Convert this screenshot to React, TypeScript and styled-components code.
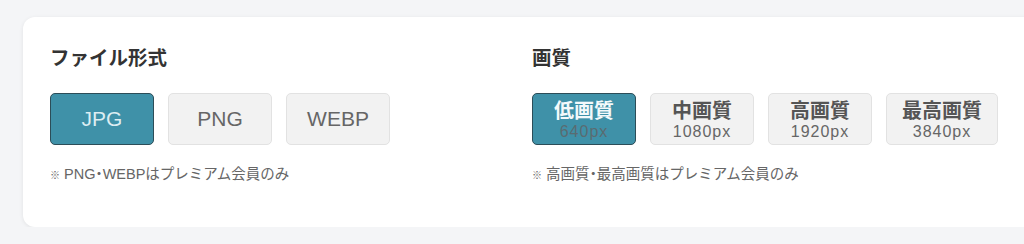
import React, { useState } from "react";
import styled, { createGlobalStyle, css } from "styled-components";

const Global = createGlobalStyle`
  html, body {
    margin: 0;
    padding: 0;
    background: #f4f5f7;
    overflow: hidden;
  }
  body {
    font-family: "Liberation Sans", "Noto Sans CJK JP", sans-serif;
    color: #333;
  }
`;

const Page = styled.div`
  padding: 17px 0 0 23px;
  width: 1100px;
`;

const Card = styled.div`
  width: 1018px;
  box-sizing: border-box;
  background: #fff;
  border-radius: 12px;
  box-shadow: 0 1px 4px rgba(0, 0, 0, 0.08);
  padding: 26px 27px 0 27px;
  height: 210px;
  display: grid;
  grid-template-columns: 1fr 1fr;
`;

const Section = styled.section`
  display: flex;
  flex-direction: column;
`;

const Title = styled.h2`
  margin: 0;
  font-size: 19.5px;
  line-height: 28px;
  font-weight: 700;
  color: #333;
  font-family: "Noto Sans CJK JP", sans-serif;
`;

const Options = styled.div`
  display: flex;
  gap: 14px;
  margin-top: 22px;
`;

const OptionButton = styled.button<{ $active?: boolean }>`
  box-sizing: border-box;
  min-width: 104px;
  height: 52px;
  padding: 0 16px;
  border-radius: 5px;
  border: 1.5px solid #e2e2e2;
  background: #f2f2f2;
  color: #666;
  font-family: "Liberation Sans", "Noto Sans CJK JP", sans-serif;
  font-size: 21px;
  display: flex;
  flex-direction: column;
  align-items: center;
  justify-content: center;
  cursor: pointer;
  ${(p) =>
    p.$active &&
    css`
      background: #3f91a8;
      border-color: #2c4d58;
      color: #dcedf2;
    `}
`;

const QualityButton = styled(OptionButton)`
  padding: 4px 15px 0;
`;

const QualityLabel = styled.span<{ $active?: boolean }>`
  font-family: "Noto Sans CJK JP", sans-serif;
  font-weight: 700;
  font-size: 20px;
  line-height: 22px;
  color: ${(p) => (p.$active ? "#f3f9fb" : "#555")};
`;

const QualitySub = styled.span<{ $active?: boolean }>`
  font-size: 16px;
  line-height: 22px;
  letter-spacing: 1px;
  color: ${(p) => (p.$active ? "#5a6b71" : "#666")};
`;

const Note = styled.p`
  margin: 18px 0 0;
  font-size: 14.5px;
  line-height: 20px;
  color: #666;
  font-family: "Liberation Sans", "Noto Sans CJK JP", sans-serif;
`;

const Mark = styled.span`
  font-size: 10px;
  margin-right: 4px;
`;

const Dot = styled.span`
  font-family: "Noto Sans CJK JP", sans-serif;
  font-feature-settings: "halt" 1;
`;

const formats = ["JPG", "PNG", "WEBP"];
const qualities = [
  { label: "低画質", px: "640px" },
  { label: "中画質", px: "1080px" },
  { label: "高画質", px: "1920px" },
  { label: "最高画質", px: "3840px" },
];

export default function App() {
  const [format, setFormat] = useState("JPG");
  const [quality, setQuality] = useState("低画質");
  return (
    <>
      <Global />
      <Page>
        <Card>
          <Section>
            <Title>ファイル形式</Title>
            <Options>
              {formats.map((f) => (
                <OptionButton key={f} $active={f === format} onClick={() => setFormat(f)}>
                  {f}
                </OptionButton>
              ))}
            </Options>
            <Note>
              <Mark>※</Mark>PNG<Dot>・</Dot>WEBPはプレミアム会員のみ
            </Note>
          </Section>
          <Section>
            <Title>画質</Title>
            <Options>
              {qualities.map((q) => (
                <QualityButton
                  key={q.label}
                  $active={q.label === quality}
                  onClick={() => setQuality(q.label)}
                >
                  <QualityLabel $active={q.label === quality}>{q.label}</QualityLabel>
                  <QualitySub $active={q.label === quality}>{q.px}</QualitySub>
                </QualityButton>
              ))}
            </Options>
            <Note>
              <Mark>※</Mark>高画質<Dot>・</Dot>最高画質はプレミアム会員のみ
            </Note>
          </Section>
        </Card>
      </Page>
    </>
  );
}
